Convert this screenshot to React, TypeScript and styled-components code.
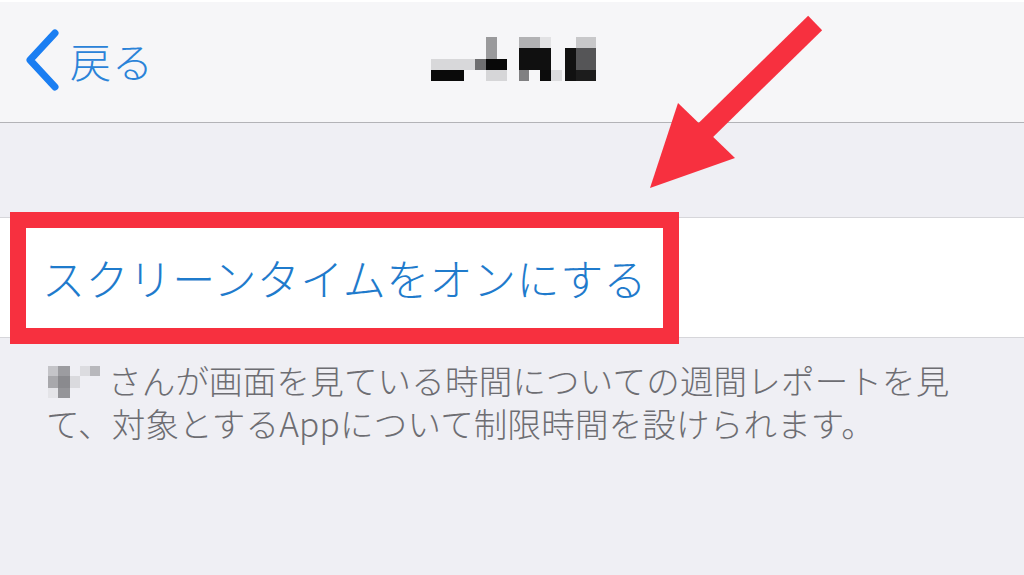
import React from 'react';
import styled, { createGlobalStyle } from 'styled-components';

const GlobalStyle = createGlobalStyle`
  html, body {
    margin: 0;
    padding: 0;
    background: #efeff4;
  }
  body {
    font-family: "Noto Sans CJK JP", "Noto Sans", sans-serif;
  }
`;

const Screen = styled.div`
  position: relative;
  width: 1024px;
  height: 575px;
  overflow: hidden;
  background: #efeff4;
  display: flex;
  flex-direction: column;
`;

const NavBar = styled.header`
  height: 123px;
  flex-shrink: 0;
  background: #f6f6f8;
  border-top: 2px solid #ffffff;
  border-bottom: 1px solid #b3b3b7;
  box-sizing: border-box;
  display: grid;
  grid-template-columns: 1fr auto 1fr;
  align-items: center;
`;

const BackButton = styled.div`
  display: flex;
  align-items: center;
  gap: 10px;
  padding-left: 24px;
  color: #2a83d8;
  font-size: 41px;
  font-weight: 300;
  line-height: 1;
  padding-bottom: 4px;
`;

const BackLabel = styled.span`
  letter-spacing: 1px;
`;

const TitleBlur = styled.div`
  display: flex;
  justify-content: center;
  padding-left: 4px;
  padding-bottom: 4px;
`;

const Spacer = styled.div`
  height: 94px;
  flex-shrink: 0;
`;

const Row = styled.div`
  height: 121px;
  flex-shrink: 0;
  background: #ffffff;
  border-top: 1px solid #d6d6da;
  border-bottom: 1px solid #d6d6da;
  box-sizing: border-box;
  display: flex;
  align-items: stretch;
  padding-left: 10px;
`;

const Highlight = styled.div`
  margin: -6px 0 -7px 0;
  width: 669px;
  box-sizing: border-box;
  border: 16px solid #f7303f;
  display: flex;
  align-items: center;
  padding-left: 16px;
  padding-bottom: 2px;
`;

const ActionText = styled.span`
  color: #1f7bcc;
  font-size: 43px;
  font-weight: 300;
  letter-spacing: 0.4px;
  white-space: nowrap;
`;

const Footer = styled.p`
  margin: 0;
  padding: 20px 60px 0 46px;
  color: #6d6d72;
  font-size: 33.5px;
  font-weight: 300;
  line-height: 43px;
  letter-spacing: 0.2px;
`;

const NameBlur = styled.span`
  display: inline-block;
  width: 62px;
  height: 32px;
  vertical-align: -4px;
`;

const ArrowLayer = styled.svg`
  position: absolute;
  left: 0;
  top: 0;
  pointer-events: none;
`;

const Chevron = () => (
  <svg width="36" height="62" viewBox="0 0 36 62">
    <path
      d="M31 4 L6 31 L31 58"
      fill="none"
      stroke="#1a7ef2"
      strokeWidth="7"
      strokeLinecap="round"
      strokeLinejoin="round"
    />
  </svg>
);

const TitlePixels = () => (
  <svg width="166" height="46" viewBox="0 0 166 46">
    <rect x="0" y="22" width="44" height="11" fill="#d8d8da" />
    <rect x="0" y="33" width="33" height="11" fill="#0a0a0a" />
    <rect x="55" y="0" width="11" height="22" fill="#9a9a9c" />
    <rect x="44" y="22" width="11" height="11" fill="#6e6e70" />
    <rect x="55" y="22" width="21" height="11" fill="#080808" />
    <rect x="55" y="33" width="21" height="11" fill="#d6d6d8" />
    <rect x="88" y="0" width="21" height="11" fill="#b2b2b4" />
    <rect x="109" y="0" width="11" height="11" fill="#e2e2e4" />
    <rect x="88" y="11" width="32" height="22" fill="#101010" />
    <rect x="88" y="33" width="10" height="11" fill="#808082" />
    <rect x="109" y="33" width="11" height="11" fill="#0c0c0c" />
    <rect x="120" y="33" width="11" height="11" fill="#dcdcde" />
    <rect x="145" y="0" width="20" height="11" fill="#c8c8ca" />
    <rect x="134" y="11" width="11" height="33" fill="#111111" />
    <rect x="145" y="11" width="20" height="22" fill="#555557" />
    <rect x="145" y="33" width="20" height="11" fill="#1c1c1c" />
  </svg>
);

const NamePixels = () => (
  <NameBlur>
    <svg width="62" height="32" viewBox="0 0 62 32">
      <rect x="2" y="0" width="10" height="10" fill="#c4c4c8" />
      <rect x="12" y="0" width="12" height="10" fill="#9c9ca0" />
      <rect x="34" y="0" width="10" height="10" fill="#dcdce0" />
      <rect x="44" y="0" width="10" height="10" fill="#b8b8bc" />
      <rect x="2" y="10" width="10" height="12" fill="#a8a8ac" />
      <rect x="12" y="10" width="12" height="12" fill="#8a8a8e" />
      <rect x="24" y="10" width="10" height="12" fill="#dadade" />
      <rect x="2" y="22" width="10" height="10" fill="#e4e4e8" />
      <rect x="12" y="22" width="12" height="10" fill="#959599" />
    </svg>
  </NameBlur>
);

export default function App() {
  return (
    <>
      <GlobalStyle />
      <Screen>
        <NavBar>
          <BackButton>
            <Chevron />
            <BackLabel>戻る</BackLabel>
          </BackButton>
          <TitleBlur>
            <TitlePixels />
          </TitleBlur>
          <div />
        </NavBar>
        <Spacer />
        <Row>
          <Highlight>
            <ActionText>スクリーンタイムをオンにする</ActionText>
          </Highlight>
        </Row>
        <Footer>
          <NamePixels />
          さんが画面を見ている時間についての週間レポートを見て、対象とするAppについて制限時間を設けられます。
        </Footer>
        <ArrowLayer width="1024" height="575" viewBox="0 0 1024 575">
          <line x1="808" y1="30" x2="712" y2="124" stroke="#f7303f" strokeWidth="20" strokeLinecap="square" />
          <polygon points="650,188 678,103 735,158" fill="#f7303f" />
        </ArrowLayer>
      </Screen>
    </>
  );
}
